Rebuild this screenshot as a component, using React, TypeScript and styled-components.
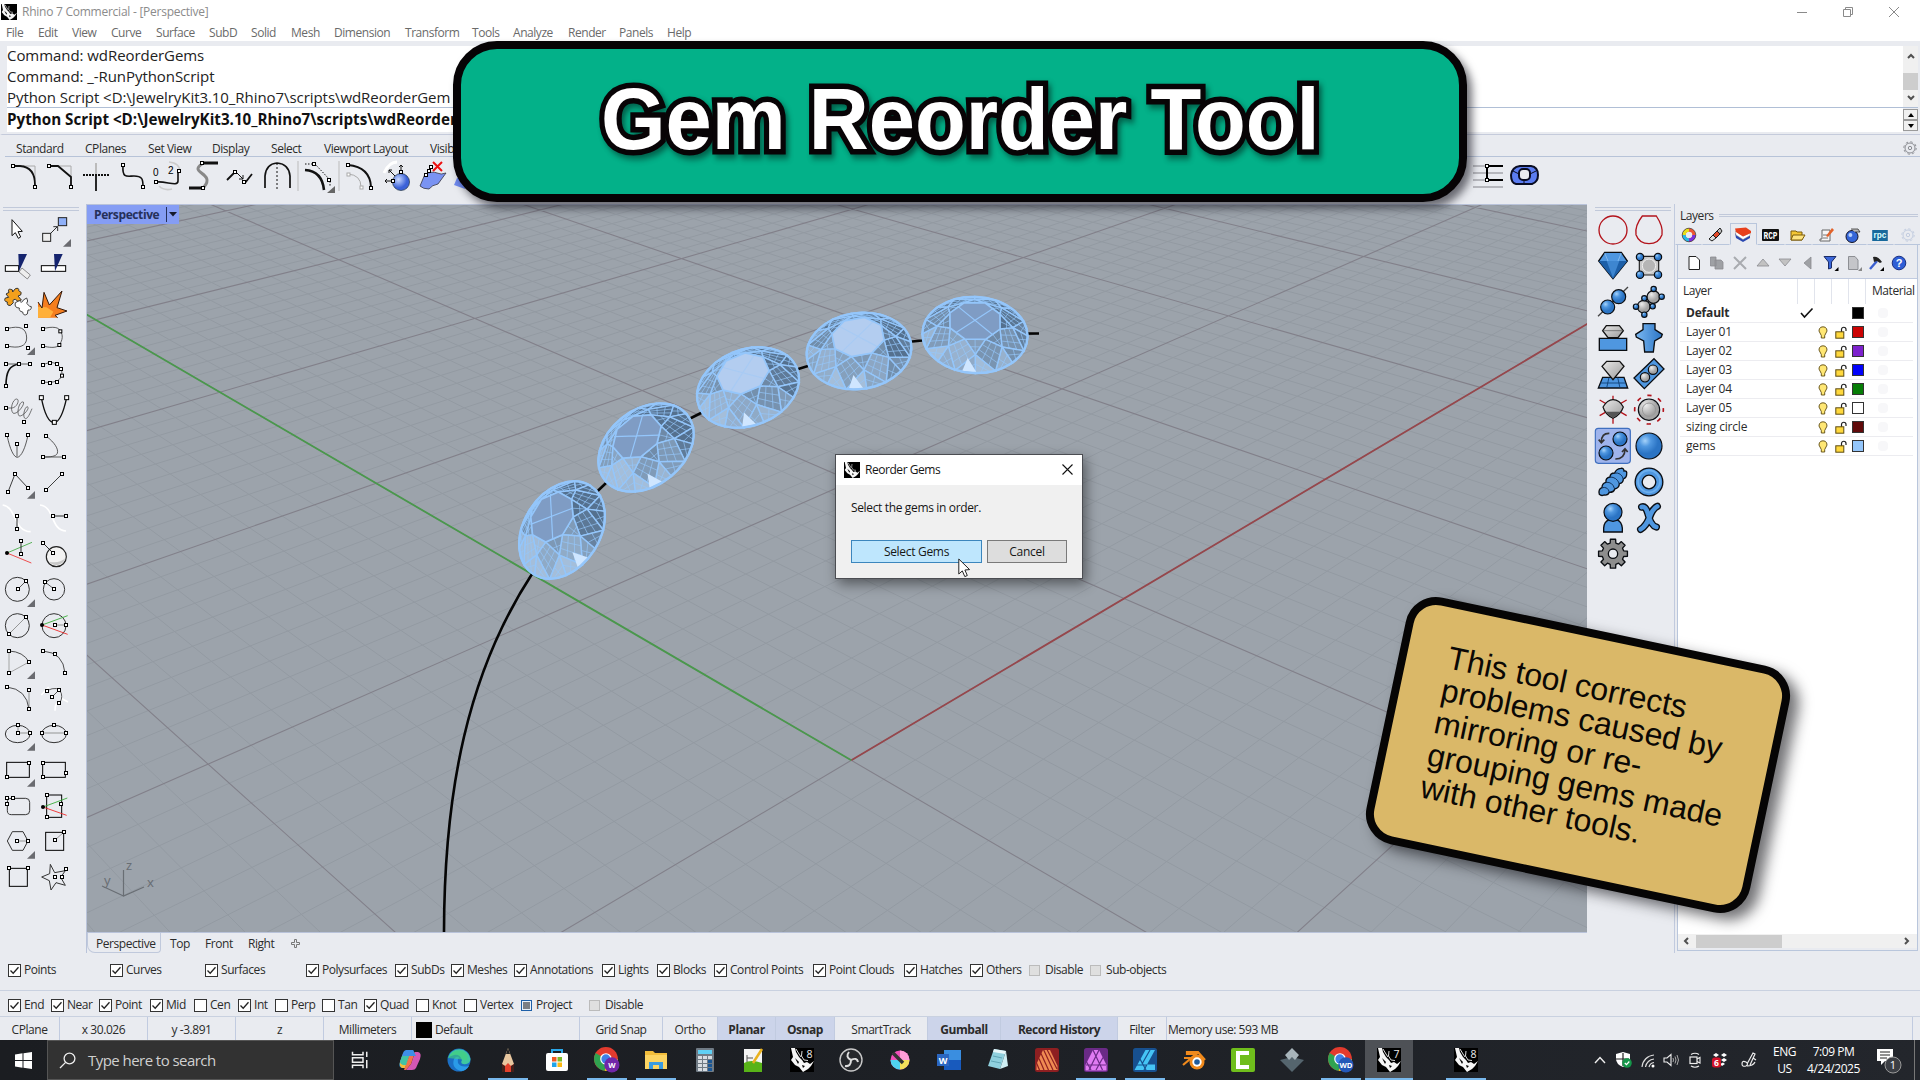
import React from 'react';
import styled, { createGlobalStyle, css } from 'styled-components';

const UI = '"Open Sans", "Noto Sans", sans-serif';

const Global = createGlobalStyle`
  html, body { margin: 0; padding: 0; background: #e9ebf0; }
  *, *::before, *::after { box-sizing: border-box; }
  svg { display: block; }
`;

const Screen = styled.div`
  position: relative;
  width: 1920px;
  height: 1080px;
  overflow: hidden;
  display: flex;
  flex-direction: column;
  background: #e9ebf0;
  color: #2b2b2b;
  font: 12px/16px ${UI};
  letter-spacing: -0.45px;
  white-space: nowrap;
`;

/* ---------- title, menu, command line ---------- */
const TitleBar = styled.div`
  height: 23px;
  background: #fff;
  display: flex;
  align-items: center;
  padding: 0 20px 0 1px;
  gap: 5px;
  color: #8b8b8b;
  letter-spacing: -0.25px;
`;
const WindowButtons = styled.div`
  margin-left: auto;
  display: flex;
  gap: 34px;
`;
const MenuBar = styled.div`
  height: 18px;
  background: #fff;
  display: flex;
  align-items: center;
  padding: 2px 0 0 6px;
  color: #6a6a6a;
`;
const Slot = styled.div<{ $w: number }>`
  width: ${(p) => p.$w}px;
  flex: none;
`;
const CommandArea = styled.div`
  height: 94px;
  padding: 5px 2px 0 5px;
  border-bottom: 1px solid #c5cbdb;
  border-left: 2px solid #e9ebf0;
  display: flex;
  flex-direction: column;
  color: #222;
  font-size: 15px;
`;
const History = styled.div`
  height: 62px;
  display: flex;
  background: #fff;
  border-bottom: 1px solid #b0bfd6;
`;
const HistoryLines = styled.div`
  flex: 1;
  height: 61px;
  margin-top: -1px;
  line-height: 20.8px;
  letter-spacing: -0.06px;
`;
const ScrollTrack = styled.div`
  width: 15px;
  background: #f0f0f0;
  display: flex;
  flex-direction: column;
  align-items: center;
  justify-content: space-between;
  padding: 6px 0 5px;
`;
const ScrollThumb = styled.div`
  width: 15px;
  height: 17px;
  background: #cdcdcd;
  margin-top: 8px;
`;
const Prompt = styled.div`
  height: 24px;
  display: flex;
  justify-content: space-between;
  background: #fff;
  font-weight: 700;
  font-size: 15.2px;
  color: #111;
  line-height: 22px;
  letter-spacing: 0;
`;
const Spinner = styled.div`
  width: 15px;
  padding-top: 1px;
  background: #e9ebf0;
  display: grid;
  grid-template-rows: 11px 11px;
`;
const SpinButton = styled.div`
  border: 1px solid #9a9a9a;
  background: #f0f0f0;
  display: flex;
  align-items: center;
  justify-content: center;
`;
const TabStrip = styled.div`
  height: 22px;
  margin-left: 5px;
  border-bottom: 1px solid #b7c3d8;
  display: flex;
  align-items: center;
  padding: 5px 3px 0 11px;
`;
const TabLabel = styled(Slot)`
  padding-top: 2px;
`;
const ToolRow = styled.div`
  height: 47px;
  display: flex;
  padding: 2px 0 0 6px;
`;
const ToolSlot = styled.div<{ $gap?: number }>`
  width: 36px;
  height: 36px;
  flex: none;
  margin-left: ${(p) => p.$gap ?? 0}px;
  svg { overflow: visible; }
`;

/* ---------- main area ---------- */
const Main = styled.div`
  height: 749px;
  display: flex;
`;
const Side = styled.div`
  width: 87px;
  flex: none;
  padding-top: 3px;
  border-right: 1px solid #b9c3da;
`;
const Grip = styled.div<{ $m: string }>`
  height: 4px;
  margin: ${(p) => p.$m};
  border: solid #c1c9da;
  border-width: 1px 0;
`;
const SideGrid = styled.div`
  display: grid;
  grid-template-columns: 36px 36px;
  grid-auto-rows: 36px;
  svg { overflow: visible; }
`;
const Center = styled.div`
  width: 1500px;
  flex: none;
  display: flex;
  flex-direction: column;
`;
const Viewport = styled.div`
  position: relative;
  height: 729px;
  border-top: 1px solid #b9c3da;
  border-bottom: 1px solid #b9c3da;
  background: #9ca3ab;
  overflow: hidden;
`;
const Scene = styled.svg`
  position: absolute;
  left: 0;
  top: 0;
`;
const ViewLabel = styled.div`
  position: relative;
  width: 92px;
  height: 19px;
  background: #859df4;
  color: #25305a;
  font-weight: 700;
  display: flex;
  align-items: center;
  gap: 7px;
  padding-left: 7px;
  letter-spacing: -0.4px;
`;
const LabelArrow = styled.div`
  height: 15px;
  border-left: 1px solid #25305a;
  padding: 5px 0 0 2px;
`;
const ViewTabs = styled.div`
  height: 20px;
  display: flex;
  align-items: flex-start;
`;
const ViewTab = styled.div<{ $w: number; $on?: boolean }>`
  width: ${(p) => p.$w}px;
  height: 20px;
  line-height: 22px;
  ${(p) => p.$on && css`
    padding-left: 8px;
    border: 1px solid #c0c9dc;
    border-top: 0;
    border-radius: 0 0 4px 8px;
    margin-right: 9px;
  `}
`;
const Palette = styled.div`
  width: 88px;
  flex: none;
  padding-top: 3px;
  border-right: 1px solid #c1cade;
`;
const PaletteGrid = styled(SideGrid)`
  margin: 1px 0 0 7.5px;
`;

/* ---------- layers panel ---------- */
const Layers = styled.div`
  width: 243px;
  flex: none;
  padding: 3px 0 0 2px;
  display: flex;
  flex-direction: column;
`;
const PanelTitle = styled.div`
  display: flex;
  align-items: center;
  height: 16px;
  padding: 1px 0 0 3px;
  gap: 5px;
`;
const TitleRule = styled.div`
  flex: 1;
  height: 3px;
  border: solid #c1c9da;
  border-width: 1px 0;
`;
const PanelTabs = styled.div`
  height: 22px;
  display: flex;
  margin-left: -2px;
`;
const PanelTab = styled.div<{ $on?: boolean }>`
  width: 27.4px;
  flex: none;
  height: 22px;
  border: 1px solid transparent;
  border-bottom-color: #b9c6dc;
  display: flex;
  align-items: center;
  justify-content: center;
  padding-top: 2px;
  ${(p) => p.$on && css`border-color: #b9c6dc #b9c6dc transparent;`}
`;
const PanelBody = styled.div`
  flex: none;
  height: 706px;
  display: flex;
  flex-direction: column;
  border: solid #b9c6dc;
  border-width: 0 1px 0 1px;
`;
const PanelTools = styled.div`
  height: 34px;
  display: flex;
  align-items: center;
  border-bottom: 1px solid #c1cbe0;
  padding: 2px 0 0 5px;
  flex: none;
`;
const PanelTool = styled.div`
  width: 22.75px;
  flex: none;
  display: flex;
  justify-content: center;
`;
const HeaderRow = styled.div`
  height: 25px;
  flex: none;
  background: #fff;
  display: flex;
  line-height: 24px;
  padding-left: 5px;
`;
const HeaderCell = styled.div<{ $w: number }>`
  width: ${(p) => p.$w}px;
  border-right: 1px solid #e1e4ec;
`;
const LayerRows = styled.div`
  flex: 1;
  background: #fff;
  padding: 0 4px 0 2px;
`;
const LayerRow = styled.div<{ $on?: boolean }>`
  height: 19px;
  display: flex;
  align-items: center;
  border-bottom: 1px solid #ececf0;
  padding-left: 6px;
  font-weight: ${(p) => (p.$on ? 700 : 400)};
  letter-spacing: -0.18px;
`;
const LayerCell = styled.div<{ $w: number }>`
  width: ${(p) => p.$w}px;
  flex: none;
`;
const Swatch = styled.div<{ $c: string }>`
  width: 12px;
  height: 12px;
  border: 1px solid #333;
  background: ${(p) => p.$c};
`;
const MatDot = styled.div`
  width: 10px;
  height: 10px;
  margin-left: 14px;
  border-radius: 4px;
  background: #f7f7f9;
`;
const HScroll = styled.div`
  height: 14px;
  background: #f0f0f0;
  display: flex;
  align-items: center;
  padding: 0 6px 0 4px;
`;
const HThumb = styled.div`
  width: 86px;
  height: 13px;
  margin: 0 auto 0 6px;
  background: #cdcdcd;
`;
const PanelFoot = styled.div`
  height: 3px;
  border-bottom: 1px solid #b9c6dc;
`;

/* ---------- check rows and status bar ---------- */
const CheckRow = styled.div<{ $h: number; $pad: number }>`
  height: ${(p) => p.$h}px;
  display: flex;
  padding: ${(p) => p.$pad}px 0 0 8px;
  border-bottom: 1px solid #c9d1e0;
`;
const CheckItem = styled.div<{ $w: number }>`
  width: ${(p) => p.$w}px;
  height: 16px;
  flex: none;
  display: flex;
  align-items: center;
  gap: 3px;
`;
const Box = styled.div<{ $s: string }>`
  width: 13px;
  height: 13px;
  flex: none;
  background: #fff;
  border: 1px solid #333;
  ${(p) => p.$s === 'dis' && css`width: 11px; height: 11px; margin: 0 2px 0 0; background: #dfdfdf; border-color: #bbb;`}
  ${(p) => p.$s === 'mix' && css`width: 11px; height: 11px; margin-right: 1px; border-color: #1d5fa8; background: #7b7f85; box-shadow: inset 0 0 0 1px #e9f2fb;`}
`;
const StatusBar = styled.div`
  height: 23px;
  display: flex;
`;
const StatusCell = styled.div<{ $w: number; $on?: boolean; $left?: boolean }>`
  width: ${(p) => p.$w}px;
  flex: none;
  border-right: 1px solid #c1cbe0;
  display: flex;
  align-items: center;
  justify-content: ${(p) => (p.$left ? 'flex-start' : 'center')};
  gap: 3px;
  padding: 2px 0 0 ${(p) => (p.$left ? 4 : 0)}px;
  background: ${(p) => (p.$on ? '#ccd4ea' : 'transparent')};
  font-weight: ${(p) => (p.$on ? 700 : 400)};
`;
const BlackChip = styled.div`
  width: 16px;
  height: 16px;
  background: #000;
`;

/* ---------- taskbar ---------- */
const Taskbar = styled.div`
  height: 40px;
  display: flex;
  background: linear-gradient(90deg, #1b1d21, #1d2025 50%, #23262c);
  color: #fff;
`;
const Start = styled.div`
  width: 47px;
  padding: 12px 0 0 15px;
`;
const Search = styled.div`
  width: 287px;
  border: 1px solid #555;
  background: #323232;
  display: flex;
  align-items: center;
  gap: 12px;
  padding-left: 11px;
  font-size: 15px;
  color: #d0d0d0;
  letter-spacing: -0.55px;
`;
const Task = styled.div<{ $w?: number; $run?: boolean; $on?: boolean }>`
  width: ${(p) => p.$w ?? 49}px;
  flex: none;
  display: flex;
  align-items: center;
  justify-content: center;
  background: ${(p) => (p.$on ? '#4e5156' : 'transparent')};
  ${(p) => p.$run && css`
    background-image: linear-gradient(#78b8ec, #78b8ec);
    background-repeat: no-repeat;
    background-position: bottom center;
    background-size: ${p.$on ? 48 : 40}px 2px;
  `}
`;
const Tray = styled.div`
  margin-left: auto;
  display: flex;
  align-items: center;
  font-size: 12px;
  line-height: 17px;
  text-align: center;
`;
const TraySlot = styled.div<{ $w: number }>`
  width: ${(p) => p.$w}px;
  flex: none;
  display: flex;
  justify-content: center;
`;
const Peek = styled.div`
  width: 6px;
  height: 40px;
  border-left: 1px solid #777;
`;

/* ---------- overlays ---------- */
const Banner = styled.div`
  position: absolute;
  left: 453px;
  top: 41px;
  width: 1014px;
  height: 161px;
  border: 8px solid #060305;
  border-radius: 44px;
  background: #03b189;
  box-shadow: 5px 6px 9px rgba(20, 20, 30, 0.6);
  display: flex;
  justify-content: center;
  align-items: center;
`;
const BannerText = styled.div`
  font: 700 87px/100px "Liberation Sans", Arial, sans-serif;
  letter-spacing: 0;
  color: #fff;
  -webkit-text-stroke: 11px #080406;
  paint-order: stroke fill;
  transform: scaleX(0.955);
  filter: drop-shadow(3px 4px 3px rgba(0, 0, 0, 0.45));
  padding-bottom: 6px;
`;
const Note = styled.div`
  position: absolute;
  left: 1382px;
  top: 629px;
  width: 392px;
  height: 252px;
  border: 8px solid #060505;
  border-radius: 31px;
  background: #dab868;
  transform: rotate(11.9deg);
  box-shadow: 10px 5px 14px rgba(20, 20, 25, 0.6);
  padding: 33px 0 0 41px;
  font: 32px/33px "Liberation Sans", Arial, sans-serif;
  letter-spacing: 0;
  color: #0b0805;
`;
const Dialog = styled.div`
  position: absolute;
  left: 835px;
  top: 454px;
  width: 248px;
  height: 125px;
  border: 1px solid #4b4d52;
  background: #f0f0f0;
  box-shadow: 3px 5px 12px rgba(0, 0, 0, 0.45);
  color: #161616;
`;
const DialogTitle = styled.div`
  height: 30px;
  background: #fff;
  display: flex;
  align-items: center;
  padding: 0 9px 1px 8px;
  gap: 5px;
  svg:last-child { margin-left: auto; }
`;
const DialogText = styled.div`
  padding: 15px 0 0 15px;
  letter-spacing: -0.35px;
`;
const DialogButtons = styled.div`
  display: flex;
  gap: 5px;
  padding: 24px 0 0 15px;
`;
const DialogButton = styled.div<{ $w: number; $hot?: boolean }>`
  width: ${(p) => p.$w}px;
  height: 23px;
  border: 1px solid ${(p) => (p.$hot ? '#3c86bd' : '#7a7a7a')};
  background: ${(p) => (p.$hot ? '#bee6fd' : '#dddddd')};
  line-height: 21px;
  text-align: center;
  letter-spacing: -0.3px;
`;
const Cursor = styled.svg`
  position: absolute;
  left: 122px;
  top: 103px;
`;

/* ---------- shared drawings ---------- */
const LogoSvg = styled.svg`
  overflow: visible;
`;
const RhinoLogo = ({ w = 16, n }: { w?: number; n?: string }) => (
  <LogoSvg width={w} height={w} viewBox="0 0 24 24">
    <rect width="24" height="24" fill="#000" />
    <path d="M1 0 L5 0 L6 4 L9 9 L12 12 L14 15 L17 14 L20 16 L24 13 L21 18 L18 21 L13 24 L9 19 L5 17 L1 12 L3 9z" fill="#f6f6f6" />
    <path d="M6 1 L9 6 L11 9 M12 3 L11.5 8 L14 12 L18 12.5" stroke="#ddd" strokeWidth="1" fill="none" />
    <path d="M5 10 L9 14 L8 16z M12 17 L15 18 L13 20z" fill="#000" />
    {n && <text x="16.5" y="9.5" fontSize="10.5" fill="#eee" letterSpacing="0" fontFamily="Open Sans, sans-serif">{n}</text>}
  </LogoSvg>
);
const Caret = ({ d, s = '#505050' }: { d: string; s?: string }) => (
  <svg width="8" height="8" viewBox="0 0 8 8"><path d={d} fill="none" stroke={s} strokeWidth="2" /></svg>
);
const Gear = ({ c, w = 14 }: { c: string; w?: number }) => (
  <svg width={w} height={w} viewBox="0 0 14 14" fill="none" stroke={c}>
    <circle cx="7" cy="7" r="5" /><circle cx="7" cy="7" r="6.2" strokeDasharray="2.4 2.4" /><circle cx="7" cy="7" r="1.7" />
  </svg>
);

/* Square control-point handles on the three-units-per-pixel icon artboard. */
const Pts = ({ at, r = 4.5 }: { at: number[][]; r?: number }) => (
  <>{at.map(([x, y], i) => <rect key={i} x={x - r} y={y - r} width={r * 2} height={r * 2} fill="#fff" stroke="#000" strokeWidth="3" />)}</>
);
const Flyout = ({ x, y }: { x: number; y: number }) => <path d={`M${x} ${y} v-23 l-24 23z`} fill="#6a6b70" />;
const Thin = ({ d, c = '#444', w = 2.6 }: { d: string; c?: string; w?: number }) => <path d={d} fill="none" stroke={c} strokeWidth={w} />;

const leftIcons: React.ReactNode[] = [
  <path d="M36 59 L36 107 L46 98 L55 115 L62 111 L54 95 L67 94z" fill="#fff" stroke="#111" strokeWidth="3" />,
  <><Thin d="M150 102 L172 80 M160 80 h13 v13" c="#111" /><rect x="175" y="53" width="25" height="24" fill="#8fb0f8" stroke="#222" strokeWidth="3" /><rect x="128" y="100" width="24" height="24" fill="#eee" stroke="#222" strokeWidth="3" /><Flyout x={213} y={140} /></>,
  <><rect x="16" y="197" width="40" height="17" fill="#fff" stroke="#000" strokeWidth="3" /><path d="M55 162 h26 l-24 52z" fill="#15246e" /><path d="M66 204 l25 21 l-9 12 l-25 -21z" fill="#eee" stroke="#777" strokeWidth="2.5" /></>,
  <><rect x="124" y="197" width="73" height="17" fill="#fff" stroke="#000" strokeWidth="3" /><path d="M162 162 h26 l-23 52z" fill="#15246e" /></>,
  <>
    <path d="M18 282 L27 277 Q22 266 32 268 Q40 268 38 276 L46 266 Q58 262 56 272 Q68 276 62 285 L54 288 L64 300 L54 304 L46 298 Q36 298 40 308 L32 316 Q20 318 22 306 Q10 304 16 294 L26 292z" fill="#f2a01c" stroke="#333" strokeWidth="3" strokeLinejoin="round" />
    <path d="M46 308 L58 302 Q66 312 70 300 L80 294 Q86 304 80 310 Q90 322 94 320 Q94 332 84 330 L82 342 Q70 350 68 336 Q56 334 58 324 Q42 324 46 308z" fill="#fff" stroke="#444" strokeWidth="3" strokeLinejoin="round" />
  </>,
  <><path d="M114 353 V306 L126 324 L132 277 L148 315 L186 273 L171 323 L201 333 L165 346 L173 353z" fill="#f57e1e" /><path d="M114 353 V320 L140 322 L160 335 L150 353z" fill="#ffb03a" /><path d="M114 306 L126 324 L132 277 L148 315 L186 273 L171 323 L201 333 L165 346 L173 353" fill="none" stroke="#33180b" strokeWidth="3" /></>,
  <><Thin d="M21 386 C60 375 80 385 80 414 C80 440 55 446 21 438" /><Pts at={[[21, 387], [78, 378], [21, 438], [84, 444]]} /><Flyout x={105} y={465} /></>,
  <><Thin d="M129 386 C160 378 178 382 181 394 C190 405 188 420 178 435 C168 446 145 442 129 438" /><Pts at={[[129, 387], [181, 394], [178, 435], [129, 438]]} /></>,
  <><Thin d="M57 492 h33" /><Thin d="M18 557 C18 515 28 496 57 492" c="#111" w={5} /><Thin d="M18 492 h35" /><Pts at={[[18, 492], [57, 492], [90, 492], [18, 558]]} /></>,
  <><Thin d="M129 495 C150 483 172 485 183 507 C192 530 180 552 129 546" /><Pts at={[[129, 495], [150, 489], [171, 492], [183, 507], [186, 527], [171, 546], [150, 549], [129, 546]]} /></>,
  <><Thin d="M18 624 h18 C52 622 60 598 50 597 C38 597 28 630 40 640 C52 644 76 612 70 606 C58 602 48 640 58 648 C68 650 92 624 82 620 C74 620 66 652 76 656 C84 656 90 640 96 626" w={2.2} /><Pts at={[[18, 624], [72, 666]]} /></>,
  <><Thin d="M124 593 C135 650 148 668 163 668 C180 666 192 630 200 593" c="#111" w={4} /><Pts r={6} at={[[124, 593], [200, 593], [163, 667]]} /></>,
  <><Thin d="M21 705 C30 750 42 772 52 772 C64 770 76 745 84 705 M51 732 v38" /><Pts at={[[21, 705], [84, 705], [51, 732]]} /></>,
  <><Thin d="M138 708 C165 728 176 748 172 760 C168 770 150 771 129 771 h60" /><Pts at={[[138, 708], [129, 771], [192, 771]]} /></>,
  <><Thin d="M24 876 L45 822 L84 864" c="#222" /><Pts at={[[45, 822], [84, 864], [24, 876]]} /><Flyout x={105} y={896} /></>,
  <><Thin d="M138 870 L186 822" c="#222" /><Pts at={[[138, 870], [186, 822]]} /></>,
  <><Thin d="M8 915 C50 920 40 995 92 995" c="#fff" w={5} /><Thin d="M51 948 v38" c="#111" /><Pts at={[[51, 948], [51, 987]]} /></>,
  <><Thin d="M120 915 C165 920 150 990 198 993" c="#fff" w={5} /><Thin d="M159 948 h38" c="#111" /><Pts at={[[159, 948], [198, 948]]} /></>,
  <><Thin d="M21 1059 L96 1027" c="#4a4" /><Thin d="M21 1059 L94 1089" c="#e33" /><Thin d="M63 1023 v38" c="#111" /><circle cx="21" cy="1059" r="6" /><Pts at={[[63, 1023], [63, 1062]]} /></>,
  <><circle cx="169" cy="1070" r="30" fill="#f3f3f3" stroke="#222" strokeWidth="3.5" /><path d="M148 1085 A28 28 0 0 0 196 1075 Q176 1092 148 1085" fill="#c8c8c8" /><Thin d="M129 1029 l30 30" c="#111" /><Pts at={[[129, 1029], [159, 1059]]} /></>,
  <><circle cx="52" cy="1168" r="36" fill="none" stroke="#333" strokeWidth="3" /><Thin d="M54 1167 L78 1143" /><Pts at={[[54, 1167], [78, 1143]]} /><Flyout x={105} y={1221} /></>,
  <><circle cx="162" cy="1168" r="32" fill="none" stroke="#333" strokeWidth="3" /><Thin d="M162 1167 L135 1146" /><Pts at={[[162, 1167], [135, 1146]]} /></>,
  <><circle cx="52" cy="1277" r="36" fill="none" stroke="#333" strokeWidth="3" /><Thin d="M27 1302 L78 1251" c="#888" /><Pts at={[[27, 1302], [78, 1251]]} /></>,
  <><circle cx="162" cy="1277" r="36" fill="none" stroke="#333" strokeWidth="3" /><Thin d="M126 1275 L203 1247" c="#3a3" /><Thin d="M126 1275 L203 1303" c="#e22" /><Thin d="M165 1275 h33" c="#888" /><circle cx="126" cy="1275" r="6" /><Pts at={[[165, 1275], [198, 1275]]} /></>,
  <><Thin d="M27 1353 V1419 L87 1386" c="#999" /><Thin d="M27 1353 Q70 1355 87 1386" c="#333" /><Pts at={[[27, 1353], [87, 1386], [27, 1419]]} /><Flyout x={105} y={1437} /></>,
  <><Thin d="M129 1353 Q190 1358 195 1419" c="#333" /><Pts at={[[129, 1353], [165, 1362], [195, 1419]]} /></>,
  <><Thin d="M87 1470 V1527" c="#888" /><Thin d="M21 1461 Q80 1468 87 1527" c="#333" /><Pts at={[[21, 1461], [87, 1470], [87, 1527]]} /></>,
  <><Thin d="M124 1485 l22 -24 M165 1532 q0 -20 10 -26 M186 1496 l18 10" c="#fff" w={5} /><Thin d="M141 1472 Q175 1455 184 1480 Q188 1500 177 1509 M156 1491 L177 1470" /><Pts at={[[141, 1473], [177, 1470], [156, 1491], [177, 1509]]} /></>,
  <><ellipse cx="53" cy="1602" rx="37" ry="26" fill="none" stroke="#333" strokeWidth="3" /><Thin d="M54 1575 v24 h36" c="#888" /><Pts at={[[54, 1575], [54, 1599], [90, 1599]]} /><Flyout x={105} y={1652} /></>,
  <><ellipse cx="162" cy="1602" rx="37" ry="26" fill="none" stroke="#333" strokeWidth="3" /><Thin d="M126 1599 h72" c="#888" /><Pts at={[[162, 1575], [126, 1599], [198, 1599]]} /></>,
  <><rect x="20" y="1687" width="68" height="45" fill="none" stroke="#000" strokeWidth="3" /><Pts at={[[87, 1689], [21, 1731]]} /><Flyout x={105} y={1760} /></>,
  <><rect x="128" y="1687" width="68" height="45" fill="none" stroke="#000" strokeWidth="3" /><Pts at={[[129, 1689], [129, 1731], [198, 1719]]} /></>,
  <><rect x="22" y="1795" width="67" height="49" rx="12" fill="none" stroke="#333" strokeWidth="3" /><Pts at={[[21, 1794], [39, 1794], [21, 1812]]} /></>,
  <><rect x="140" y="1785" width="45" height="67" fill="none" stroke="#000" strokeWidth="3" /><Thin d="M129 1821 L202 1794" c="#3a3" /><Thin d="M129 1821 L200 1846" c="#e22" /><circle cx="129" cy="1821" r="6" /><Pts at={[[141, 1785], [183, 1812], [141, 1851]]} /></>,
  <><path d="M22 1923 L37 1895 H69 L84 1923 L69 1951 H37z" fill="none" stroke="#333" strokeWidth="3" /><Thin d="M51 1923 h33" c="#888" /><Pts at={[[51, 1923], [84, 1923]]} /><Flyout x={105} y={1976} /></>,
  <><rect x="137" y="1897" width="54" height="54" fill="none" stroke="#000" strokeWidth="3" /><Thin d="M165 1920 L192 1896" c="#888" /><Pts at={[[165, 1920], [192, 1896]]} /></>,
  <><rect x="28" y="2005" width="54" height="54" fill="none" stroke="#000" strokeWidth="3" /><Pts at={[[27, 2004], [84, 2004]]} /></>,
  <><path d="M151 1993 L164 2018 L196 2012 L182 2032 L196 2056 L168 2048 L153 2070 L148 2042 L125 2031 L149 2021z" fill="none" stroke="#333" strokeWidth="3" /><Pts at={[[198, 2007], [165, 2031], [186, 2031]]} /></>,
];

const Ball = ({ x, y, r, c = 'url(#blueBall)' }: { x: number; y: number; r: number; c?: string }) => (
  <circle cx={x} cy={y} r={r} fill={c} stroke="#0a0d12" strokeWidth="3.5" />
);
const GRAY = 'url(#grayBall)';
const BLUE = '#4f97e0';
const ropeOutline = 'M86 884 Q82 868 94 864 Q94 850 106 848 Q104 834 118 832 Q118 820 132 820 Q136 808 150 806 Q160 804 160 814 Q170 812 168 824 Q168 834 158 838 Q158 850 146 852 Q146 864 132 868 Q130 878 116 878 Q112 888 100 886 Q92 890 86 884z';
const crossStrokes = 'M213 922 Q225 918 231 940 Q240 978 257 982 M260 920 Q246 926 236 954 Q226 980 210 989';
const gearShape = Array.from({ length: 8 }, (_, i) =>
  [[-0.26, 33], [-0.18, 44], [0.18, 44], [0.26, 33]]
    .map(([o, r], j) => {
      const a = (i * Math.PI) / 4 + o;
      return `${i + j === 0 ? 'M' : 'L'}${127 + r * Math.sin(a)} ${1062 - r * Math.cos(a)}`;
    })
    .join(' ')
).join(' ') + 'z';
const paletteIcons: React.ReactNode[] = [
  <circle cx="127" cy="91" r="42" fill="none" stroke="#b3131b" strokeWidth="4" />,
  <path d="M215 49 H257 Q278 80 274 105 Q264 132 235 132 Q206 132 196 105 Q192 78 215 49z" fill="none" stroke="#b3131b" strokeWidth="4" />,
  <><path d="M102 158 H152 L170 184 L127 237 L84 184z" fill={BLUE} stroke="#0a0d12" strokeWidth="4" /><path d="M84 184 H170 L127 237z" fill="#1d5fa8" /><path d="M108 184 H146 L127 234z" fill="#3e86d0" /><path d="M102 160 L112 184 M152 160 L142 184" stroke="#9ccaf5" strokeWidth="2" /></>,
  <><rect x="206" y="170" width="58" height="56" rx="14" fill="#c9c9c9" stroke="#222" strokeWidth="3.5" /><circle cx="235" cy="198" r="20" fill="#b5b5b5" stroke="#eee" strokeWidth="3" />{[[208, 172], [262, 172], [208, 225], [262, 225]].map(([x, y]) => <Ball key={x + '-' + y} x={x} y={y} r={11} />)}</>,
  <><path d="M82 350 L172 262" stroke="#444" strokeWidth="4" /><Ball x={111} y={322} r={21} /><Ball x={144} y={291} r={21} /></>,
  <><Ball x={219} y={321} r={19} c={GRAY} /><Ball x={248} y={292} r={19} c={GRAY} />{[[249, 268], [273, 291], [246, 320], [221, 345], [196, 321], [221, 296]].map(([x, y]) => <Ball key={x + '-' + y} x={x} y={y} r={8} />)}</>,
  <><path d="M86 416 h82 v36 h-82z" fill={BLUE} stroke="#0a0d12" strokeWidth="4" /><path d="M96 393 L107 378 H146 L158 393 L142 414 H112z" fill="url(#grayLin)" stroke="#111" strokeWidth="4" /><path d="M96 393 H158" stroke="#555" strokeWidth="2" /></>,
  <path d="M217 372 H253 V390 L275 404 L272 412 L252 424 L248 457 H222 L219 424 L197 412 L195 404 L217 390z" fill="url(#blueLin)" stroke="#0a0d12" strokeWidth="4" />,
  <><path d="M96 533 H160 L171 565 H83z" fill="#4c95e0" stroke="#0a0d12" strokeWidth="4" /><path d="M88 550 H166 M115 533 L108 565 M141 533 L148 565" stroke="#0a3a70" strokeWidth="2.5" /><path d="M94 500 L108 485 H147 L160 500 L127 540z" fill="url(#grayLin)" stroke="#111" strokeWidth="4" /></>,
  <><path d="M250 477 L280 508 L221 567 L190 535z" fill={BLUE} stroke="#0a0d12" strokeWidth="4" /><Ball x={223} y={533} r={14} c={GRAY} /><Ball x={247} y={510} r={14} c={GRAY} /></>,
  <><path d="M87 601 L168 648 M168 601 L87 648 M127 588 V672" stroke="#b3131b" strokeWidth="4" /><path d="M97 622 Q110 600 127 600 Q146 600 158 622 Q150 645 127 656 Q104 645 97 622z" fill="url(#grayLin)" stroke="#111" strokeWidth="3.5" /><path d="M103 636 H152 L127 655z" fill="#555" /></>,
  <><circle cx="235" cy="630" r="43" fill="none" stroke="#b3131b" strokeWidth="5" strokeDasharray="13 20.7" strokeDashoffset="6" /><Ball x={235} y={630} r={32} c={GRAY} /><circle cx="235" cy="630" r="20" fill="none" stroke="#999" strokeWidth="3" /></>,
  <><rect x="74" y="686" width="105" height="105" rx="9" fill="#9fb4ec" stroke="#3f6fbf" strokeWidth="3.5" /><Ball x={148} y={718} r={21} /><Ball x={106} y={760} r={21} /><path d="M116 701 Q92 700 92 728 M84 720 l8 9 l9 -9 M134 778 Q162 778 163 750 M154 757 l9 -10 l8 10" fill="none" stroke="#333" strokeWidth="5" /></>,
  <Ball x={235} y={739} r={39} />,
  <><path d={ropeOutline} fill={BLUE} stroke="#0a0d12" strokeWidth="4" /><path d="M94 864 Q112 860 116 878 M106 848 Q126 846 132 868 M118 832 Q138 832 146 852 M132 820 Q152 818 158 838" fill="none" stroke="#12345e" strokeWidth="3" /></>,
  <><circle cx="235" cy="847" r="31" fill="none" stroke="#0a0d12" strokeWidth="25" /><circle cx="235" cy="847" r="31" fill="none" stroke={BLUE} strokeWidth="17" /><circle cx="235" cy="845" r="33" fill="none" stroke="#6db0ef" strokeWidth="5" /></>,
  <><path d="M99 997 V985 Q100 966 116 960 H138 Q153 966 155 985 V997z" fill={BLUE} stroke="#0a0d12" strokeWidth="4" /><Ball x={127} y={938} r={27} /></>,
  <><path d={crossStrokes} fill="none" stroke="#0a0d12" strokeWidth="22" strokeLinecap="round" /><path d={crossStrokes} fill="none" stroke={BLUE} strokeWidth="14" strokeLinecap="round" /></>,
  <><path d={gearShape} fill="#8d8d8d" stroke="#0a0d12" strokeWidth="4" strokeLinejoin="round" /><circle cx="127" cy="1062" r="14" fill="#e9ebf0" stroke="#0a0d12" strokeWidth="4" /></>,
];

/* ---------- command toolbar icons, local 36px boards ---------- */
const P2 = ({ at }: { at: number[][] }) => (
  <>{at.map(([x, y], i) => <rect key={i} x={x - 1.5} y={y - 1.5} width="3" height="3" fill="#fff" stroke="#000" />)}</>
);
const K = ({ d, c = '#111', w = 1.4, dash }: { d: string; c?: string; w?: number; dash?: string }) => (
  <path d={d} fill="none" stroke={c} strokeWidth={w} strokeDasharray={dash} />
);
const topIcons: [number, React.ReactNode][] = [
  [0, <><K d="M17 7 H29 V20" c="#aaa" w={1} /><K d="M8 7 H14 Q29 8 29 26" w={1.8} /><P2 at={[[7, 7], [29, 28]]} /></>],
  [0, <><K d="M17 7 H29 V20" c="#aaa" w={1} /><K d="M8 7 H16 L29 18 V26" w={1.8} /><P2 at={[[7, 7], [29, 28]]} /></>],
  [0, <><K d="M18 4 V15" c="#bbb" w={2} /><K d="M18 15 V32" w={1.8} /><K d="M5 16 H17" dash="2 1" w={1.8} /><K d="M17 16 H31" dash="2 1" w={1.8} /></>],
  [0, <><K d="M9 7 C8 20 14 17 20 17 C28 17 29 20 29 27" w={1.6} /><P2 at={[[9, 6], [29, 28]]} /></>],
  [0, <><K d="M19 3 Q30 4 30 13 M9 27 Q14 32 22 30" c="#ccc" w={1.6} /><K d="M7 23 C16 22 28 28 28 22 V14" w={1.6} /><P2 at={[[6, 23], [29, 12]]} /><text x="3" y="17" fontSize="10" letterSpacing="0" fontFamily="Liberation Sans">0</text><text x="18" y="15" fontSize="10" letterSpacing="0" fontFamily="Liberation Sans">2</text></>],
  [0, <><K d="M16 5 C2 14 30 14 18 28" c="#888" w={3} /><K d="M16 4 H32 M3 29 H16" w={3} /><P2 at={[[16, 4], [17, 29]]} /></>],
  [0, <><K d="M5 21 L13 13 M23 24 L30 15" w={1.8} /><K d="M14 13 L21 20 M21 16 V20 H17" w={1} /><P2 at={[[13, 13], [22, 23]]} /></>],
  [0, <><K d="M7 29 V17 Q8 5 19 4 Q31 5 32 17 V29" w={1.7} /><K d="M19 4 V32" dash="2 2" w={1} /></>],
  [5, <><K d="M-1 2 V32" c="#bbb" w={1} /><K d="M6 11 Q23 12 25 31" w={2.6} /><K d="M6 5 H16 L31 21 V28" dash="1.5 1.5" w={1} /><P2 at={[[15, 5], [30, 21]]} /><path d="M36 34 v-7 l-8 7z" fill="#666" /></>],
  [8, <><K d="M-4 2 V32" c="#bbb" w={1} /><K d="M5 6 Q27 8 28 28" w={2} /><K d="M5 15 Q18 16 18 28" c="#aaa" w={1} /><P2 at={[[5, 6], [28, 29]]} /><rect x="4" y="14" width="3" height="3" fill="#fff" stroke="#aaa" /><rect x="17" y="27" width="3" height="3" fill="#fff" stroke="#aaa" /></>],
  [0, <><K d="M5 14 Q10 3 18 3" c="#fff" w={3} /><circle cx="22" cy="23" r="8.5" fill="url(#ballT)" stroke="#234" strokeWidth=".7" /><K d="M22 14 V6 M20 8 l2 -2 l2 2 M14 22 H6 M8 20 l-2 2 l2 2 M16 17 L10 11 M10 14 v-3 h3" w={1} /><P2 at={[[22, 13], [14, 22]]} /></>],
  [0, <><path d="M10 15 Q18 12 22 14 T31 14 L23 25 Q17 26 14 30 Q8 30 5 27z" fill="#7a93f2" stroke="#334" strokeWidth=".8" /><K d="M18 3 L27 12 M27 3 L18 12" c="#e11" w={2} /><P2 at={[[11, 16], [14, 12], [16, 8]]} /></>],
  [0, <path d="M3 26 L6 19 L14 17 V30z" fill="#6f8af0" />],
];

/* ---------- viewport scene ---------- */
const HORIZON = -315;
const project = (s: number, t: number) => {
  const w = 1 + 0.177 * s + 0.1735 * t;
  return [(851.3 + s * 0.177 * 2664.6 - t * 0.1735 * 993) / w, (760.3 + (s * 0.177 + t * 0.1735) * HORIZON) / w];
};
const seg = (a: number[], b: number[]) => `M${a[0].toFixed(1)} ${a[1].toFixed(1)}L${b[0].toFixed(1)} ${b[1].toFixed(1)}`;
const gridLines = () => {
  let minor = '';
  let major = '';
  for (let i = -40; i <= 110; i++) {
    const k = i / 10;
    const t0 = Math.max(-4, (0.12 - 1 - 0.177 * k) / 0.1735);
    const s0 = Math.max(-4, (0.12 - 1 - 0.1735 * k) / 0.177);
    const d = seg(project(k, t0), project(k, 12)) + seg(project(s0, k), project(12, k));
    if (i % 10) minor += d;
    else major += d;
  }
  return { minor, major };
};
const { minor, major } = gridLines();

type GemSpec = { cx: number; cy: number; rot: number; ox: number; oy: number; bright: boolean; spark: number };
const gems: GemSpec[] = [
  { cx: 562, cy: 530, rot: -57, ox: -10, oy: -13, bright: false, spark: 52 },
  { cx: 646, cy: 447.5, rot: -38, ox: -9, oy: -11, bright: false, spark: 70 },
  { cx: 748, cy: 387.5, rot: -21, ox: -5, oy: -14, bright: true, spark: 84 },
  { cx: 859, cy: 351, rot: -8, ox: -1, oy: -14, bright: true, spark: 92 },
  { cx: 975, cy: 335, rot: 3, ox: 0, oy: -14, bright: false, spark: 98 },
];
const Gem = ({ cx, cy, rot, ox, oy, bright, spark }: GemSpec) => {
  const ra = (rot * Math.PI) / 180;
  const pt = (deg: number, f: number) => {
    const a = (deg * Math.PI) / 180;
    const r = 0.51 + 0.49 * f;
    const x = 53 * r * Math.cos(a);
    const y = 38.5 * r * Math.sin(a);
    return [cx + x * Math.cos(ra) - y * Math.sin(ra) + ox * (1 - f), cy + x * Math.sin(ra) + y * Math.cos(ra) + oy * (1 - f)];
  };
  const facets: React.ReactNode[] = [];
  let mesh = '';
  const mix = (a: number[], b: number[], k: number) => [a[0] + (b[0] - a[0]) * k, a[1] + (b[1] - a[1]) * k];
  const facet = (q: number[][], n: number) => {
    const mx = (q[0][0] + q[1][0] + q[2][0] + q[3][0]) / 4 - cx;
    const my = (q[0][1] + q[1][1] + q[2][1] + q[3][1]) / 4 - cy;
    const wob = Math.sin(facets.length * 2.3 + cx) * 0.18;
    const l = Math.max(0, Math.min(1, 0.42 + my / 70 - mx / 190 + wob));
    const c = [84 + 80 * l, 112 + 78 * l, 142 + 76 * l].map(Math.round);
    facets.push(<path key={facets.length} d={'M' + q.map((p) => p.join(' ')).join('L') + 'z'} fill={`rgb(${c})`} stroke="#94c6fb" strokeWidth="1.4" />);
    for (let i = 1; i < n; i++) {
      mesh += seg(mix(q[0], q[1], i / n), mix(q[3], q[2], i / n)) + seg(mix(q[0], q[3], i / n), mix(q[1], q[2], i / n));
    }
  };
  for (let i = 0; i < 8; i++) {
    const a = i * 45 + 20;
    facet([pt(a, 0), pt(a + 22.5, 0.42), pt(a, 1), pt(a - 22.5, 0.42)], 3);
    facet([pt(a, 0), pt(a + 22.5, 0.42), pt(a + 22.5, 0.42), pt(a + 45, 0)], 2);
    facet([pt(a + 22.5, 0.42), pt(a, 1), pt(a + 11, 1), pt(a + 22.5, 1)], 2);
    facet([pt(a + 22.5, 0.42), pt(a + 22.5, 1), pt(a + 34, 1), pt(a + 45, 1)], 2);
  }
  const table = Array.from({ length: 8 }, (_, i) => pt(i * 45 + 20, 0));
  const g = spark - rot;
  const low = [pt(g + 3, 0.55), pt(g - 9, 0.97), pt(g + 7, 0.97)];
  return (
    <g>
      <ellipse cx={cx} cy={cy} rx="53" ry="38.5" transform={`rotate(${rot} ${cx} ${cy})`} fill="#8fb2dc" />
      {facets}
      <path d={mesh} stroke="#94c6fb" strokeWidth=".8" fill="none" opacity=".85" />
      <path d={'M' + table.map((p) => p.join(' ')).join('L') + 'z'} fill={bright ? '#b3cdf0' : '#7f9cc4'} stroke="#94c6fb" strokeWidth="1.6" />
      <path d={seg(pt(45, -0.05), pt(225, -0.05)) + seg(pt(135, -0.05), pt(315, -0.05))} stroke="#94c6fb" strokeWidth="1.2" opacity={bright ? 0.35 : 1} />
      <path d={'M' + low.map((p) => p.join(' ')).join('L') + 'z'} fill="#cfe6ff" />
      <ellipse cx={cx} cy={cy} rx="52.5" ry="38" transform={`rotate(${rot} ${cx} ${cy})`} fill="none" stroke="#94c6fb" strokeWidth="2.4" />
    </g>
  );
};

/* ---------- data ---------- */
const menus: [string, number][] = [['File', 32], ['Edit', 34], ['View', 39], ['Curve', 45], ['Surface', 53], ['SubD', 42], ['Solid', 40], ['Mesh', 43], ['Dimension', 71], ['Transform', 67], ['Tools', 41], ['Analyze', 55], ['Render', 51], ['Panels', 48], ['Help', 40]];
const toolTabs: [string, number][] = [['Standard', 69], ['CPlanes', 63], ['Set View', 64], ['Display', 59], ['Select', 53], ['Viewport Layout', 106], ['Visibility', 60]];
const layers: [string, string][] = [['Default', '#000'], ['Layer 01', '#cc0303'], ['Layer 02', '#7d21cd'], ['Layer 03', '#0202fb'], ['Layer 04', '#067d06'], ['Layer 05', '#fff'], ['sizing circle', '#600a0a'], ['gems', '#94c6fb']];
const filters: [string, number, string][] = [['Points', 102, 'on'], ['Curves', 95, 'on'], ['Surfaces', 101, 'on'], ['Polysurfaces', 89, 'on'], ['SubDs', 56, 'on'], ['Meshes', 63, 'on'], ['Annotations', 88, 'on'], ['Lights', 55, 'on'], ['Blocks', 57, 'on'], ['Control Points', 99, 'on'], ['Point Clouds', 91, 'on'], ['Hatches', 66, 'on'], ['Others', 59, 'on'], ['Disable', 61, 'dis'], ['Sub-objects', 90, 'dis']];
const snaps: [string, number, string][] = [['End', 43, 'on'], ['Near', 48, 'on'], ['Point', 51, 'on'], ['Mid', 44, 'on'], ['Cen', 44, 'off'], ['Int', 37, 'on'], ['Perp', 47, 'off'], ['Tan', 42, 'off'], ['Quad', 52, 'on'], ['Knot', 48, 'off'], ['Vertex', 57, 'off'], ['Project', 68, 'mix'], ['Disable', 70, 'dis']];

const Checks = ({ items }: { items: [string, number, string][] }) => (
  <>
    {items.map(([label, w, s]) => (
      <CheckItem key={label} $w={w}>
        <Box $s={s}>{s === 'on' && <svg width="11" height="11" viewBox="0 0 11 11"><path d="M1.5 5.5 L4.2 8.3 L9.5 2.3" fill="none" stroke="#222" strokeWidth="1.3" /></svg>}</Box>
        {label}
      </CheckItem>
    ))}
  </>
);

/* ---------- taskbar app icons ---------- */
const App24 = ({ children, w = 24 }: { children: React.ReactNode; w?: number }) => <svg width={w} height={w} viewBox="0 0 24 24">{children}</svg>;
const ChromeIcon = ({ label, c }: { label: string; c: string }) => (
  <App24 w={26}>
    <circle cx="11" cy="11" r="11" fill="#e33b2e" />
    <path d="M11 11 L1.5 5.5 A11 11 0 0 0 11 22z" fill="#2fa350" />
    <path d="M11 11 H22 A11 11 0 0 1 10 22z" fill="#fbc116" />
    <circle cx="11" cy="11" r="5.3" fill="#fff" /><circle cx="11" cy="11" r="4.2" fill="#3f7fe8" />
    <circle cx="16.5" cy="16.5" r="7" fill={c} />
    <text x="16.5" y="19.3" fontSize="7" fontWeight="700" fill="#fff" letterSpacing="0" textAnchor="middle" fontFamily="Open Sans, sans-serif">{label}</text>
  </App24>
);
const affinityArt = [
  { fill: 'M1.5 16 L8 2 H15 L22.5 18 V22 H1.5z', line: 'M4.5 22 L1.5 15 M9 22 L4 10.5 M13.5 22 L6 5.5 M18 22 L8.5 1.5 M22 21 L12 1.5' },
  { fill: 'M1.5 17 L9 2 H15 L22.5 17 V22.5 H1.5z', line: 'M9 2 L18.5 22 M15 2 L5 22 M2 17 H22 M1.5 12 L7 22 M19 9.5 L12 22' },
  { fill: 'M1.5 22 L12.5 2 H22 L14 16.5 H22 V22z', line: 'M1 17 H14 M7 11 L13 22 M14 16.5 L11 22 M17 2 L9 16' },
];
const Affinity = ({ a, b, kind }: { a: string; b: string; kind: number }) => (
  <App24>
    <rect width="24" height="24" rx="2.5" fill={a} />
    <path d={affinityArt[kind].fill} fill={b} />
    <path d={affinityArt[kind].line} fill="none" stroke={a} strokeWidth="1.2" />
  </App24>
);
const tasks: { w?: number; run?: boolean; on?: boolean; icon: React.ReactNode }[] = [
  { w: 51, icon: <App24 w={18}><path d="M2 1 V5 H16 V1 M2 23 V19 H16 V23 M2 9 H16 V15 H2z M21 1 V8 M21 12 V23" fill="none" stroke="#eee" strokeWidth="2" /></App24> },
  { w: 50, icon: <App24><path d="M8 2 H15 L18 8 H11 L7 20 H4 Q0 19 2 14z" fill="#2f9fe0" /><path d="M2 14 L5 6 L11 8 L7 20 H4 Q1 18 2 14" fill="#f4bd3c" /><path d="M17 4 H20 Q24 5 22 11 L18 20 Q17 22 14 22 H8 L13 16z" fill="#d457b5" /><path d="M17 4 L13 16 L8 22 H6 L11 8z" fill="#f2734d" /><path d="M2 14 L5 5 Q6 2 9 2 H15 L18 8 H11 L6 16z" fill="#3e8ee8" /><path d="M11 8 L8 17 H5 Q2 16 2 14 L4 8z" fill="#43c3a4" /></App24> },
  { w: 48, icon: <App24><circle cx="12" cy="12" r="11.5" fill="#1b6fc4" /><path d="M1 10 A11.5 11.5 0 0 1 23.5 11 Q23 17 16 16 Q13 15 15 12 Q13 6 7 7 Q3 8 1 10" fill="#3fc8a0" /><path d="M7 11 Q4 20 14 23 Q19 23 22 18 Q14 20 11 15 Q10 12 12 9 Q9 8 7 11" fill="#2a9be8" /><path d="M1 10 Q6 1 14 3 Q22 5 20 12" fill="#45d27a" opacity=".6" /></App24> },
  { w: 49, run: true, icon: <App24><path d="M12 0 L18 16 V24 H6 V16z" fill="#e8c7a0" /><path d="M12 0 L14 6 H10z" fill="#222" /><path d="M6 16 L9 18 L12 15 L15 18 L18 16 V24 H6z" fill="#e2402c" /><path d="M6 16 L9 18 V24 H6z M15 18 L18 16 V24 H15z" fill="#44201a" /></App24> },
  { w: 50, icon: <App24><path d="M7 6 V2 H17 V6" fill="none" stroke="#2aa8ea" strokeWidth="2" /><rect x="1" y="5" width="22" height="18" rx="2" fill="#fff" /><rect x="7" y="9" width="4.5" height="4.5" fill="#f05a24" /><rect x="12.5" y="9" width="4.5" height="4.5" fill="#7cba26" /><rect x="7" y="14.5" width="4.5" height="4.5" fill="#20a4ea" /><rect x="12.5" y="14.5" width="4.5" height="4.5" fill="#fdb913" /></App24> },
  { run: true, icon: <ChromeIcon label="W" c="#7127a8" /> },
  { run: true, icon: <App24><path d="M1 3 H9 L11 5 H23 V21 H1z" fill="#f2bd3b" /><path d="M1 7 H23 V21 H1z" fill="#fcd462" /><path d="M5 21 V14 H19 V21 H15 V17 H9 V21z" fill="#3a9be0" /></App24> },
  { icon: <App24><rect x="3" y="0" width="18" height="24" rx="1" fill="#707b85" /><rect x="5" y="2" width="14" height="4" fill="#5fd0f4" />{[8, 12, 16, 20].map((y) => [5, 10, 15].map((x) => <rect key={x + '.' + y} x={x} y={y} width="4" height="3" fill={x === 15 && y > 11 ? '#1a5796' : '#d8dde2'} />))}</App24> },
  { w: 48, icon: <App24><rect x="3" y="1" width="18" height="23" fill="#f4f4f4" /><path d="M3 15 Q10 11 21 15 V24 H3z" fill="#58b318" /><path d="M6 7 V14 M6 10 H12" stroke="#555" /><path d="M12 15 L21 1" stroke="#e9b11e" strokeWidth="2.5" /></App24> },
  { icon: <RhinoLogo w={24} n="8" /> },
  { icon: <App24><circle cx="12" cy="12" r="11" fill="#26282c" stroke="#c9c9c9" strokeWidth="1.4" /><path d="M12 12 Q6 9 10 4 M12 12 Q18 9 19 14 M12 12 Q12 19 6 18" fill="none" stroke="#ddd" strokeWidth="2" /></App24> },
  { icon: <App24><circle cx="12" cy="12" r="9.5" fill="#f04fb8" /><path d="M12 12 L12 2.5 A9.5 9.5 0 0 1 21.5 12z" fill="#ff9fd8" /><path d="M12 12 H21.5 A9.5 9.5 0 0 1 12 21.5z" fill="#f6e05a" /><path d="M12 12 V21.5 A9.5 9.5 0 0 1 2.5 12z" fill="#4fd2ef" /><path d="M5 5 L15 15" stroke="#333" strokeWidth="3.5" /></App24> },
  { icon: <App24><rect x="7" y="2" width="17" height="20" fill="#3a8ee0" /><rect x="7" y="12" width="17" height="10" fill="#185abd" /><rect x="0" y="6" width="12" height="12" fill="#2b66c0" /><text x="6" y="15.5" fontSize="9" fontWeight="700" letterSpacing="0" textAnchor="middle" fill="#fff" fontFamily="Open Sans, sans-serif">W</text></App24> },
  { icon: <App24><path d="M8 1 L20 3 L14 21 L2 18z" fill="#8fd0de" /><path d="M20 3 L22 18 L14 21z" fill="#cfeef3" /><path d="M8 1 L20 3 L19 6 L7 4z" fill="#e8f7fa" /><path d="M7 8 L16 10 M5 13 L15 15" stroke="#5fa5b5" /></App24> },
  { icon: <Affinity kind={0} a="#8e1f21" b="#ef8a52" /> },
  { run: true, icon: <Affinity kind={1} a="#6a2a86" b="#e07bf2" /> },
  { run: true, icon: <Affinity kind={2} a="#17508f" b="#45c4f5" /> },
  { icon: <App24><path d="M1 17 L14 6 H5 V4 H16 L23 12 M2 10 H10" fill="none" stroke="#f08a1c" strokeWidth="2.2" /><circle cx="15" cy="14" r="7.5" fill="#f08a1c" /><circle cx="15" cy="14" r="4.7" fill="#fff" /><circle cx="15" cy="14" r="2.8" fill="#1f5c9c" /></App24> },
  { icon: <App24><rect width="24" height="24" rx="2" fill="#6fbe1c" /><path d="M18 5 H7 V19 H18" fill="none" stroke="#fff" strokeWidth="4" /></App24> },
  { icon: <App24><path d="M12 9 L24 12 L12 24 L0 12z" fill="#55656e" /><path d="M12 0 L19 7 L15 12 L12 9 L9 12 L5 7z" fill="#a8b5bb" /></App24> },
  { run: true, icon: <ChromeIcon label="WD" c="#2458b8" /> },
  { run: true, on: true, w: 48, icon: <RhinoLogo w={24} n="7" /> },
];

const shade = { stroke: '#1d1d1d', strokeWidth: 1 };
const grayed = { fill: '#9fa1a5', stroke: '#8a8c90', strokeWidth: 0.8 };
const I16 = ({ children }: { children: React.ReactNode }) => <svg width="16" height="16" viewBox="0 0 16 16">{children}</svg>;

const panelTabs: React.ReactNode[] = [
  <I16><circle cx="8" cy="8" r="5" fill="none" stroke="#e53" strokeWidth="3.4" /><path d="M3 8 A5 5 0 0 1 8 3" stroke="#e6e018" strokeWidth="3.4" fill="none" /><path d="M3 8 A5 5 0 0 0 8 13" stroke="#24b8e8" strokeWidth="3.4" fill="none" /><path d="M8 13 A5 5 0 0 0 13 8" stroke="#7a2fe0" strokeWidth="3.4" fill="none" /><circle cx="8" cy="8" r="6.8" fill="none" stroke="#333" strokeWidth=".7" /></I16>,
  <I16><path d="M1 12 L5 8 L8 11 L4 14z" fill="#ddd" {...shade} /><path d="M5 8 L9 4 L12 7 L8 11z" fill="#e34a2a" {...shade} /><path d="M9 4 L12 1 L14 4 L12 7z" fill="#bbb" {...shade} /></I16>,
  <I16><path d="M0 6 L8 11 L15 8 V11 L8 15 L1 11z" fill="#2947b0" /><path d="M0 4 L8 9 L15 6 V8.5 L8 12.5 L1 8z" fill="#fff" stroke="#888" strokeWidth=".5" /><path d="M0 1.5 L11 .5 L16 4 V6 L8 9.5 L1 5z" fill="#e8401c" /></I16>,
  <svg width="17" height="12" viewBox="0 0 17 12"><rect width="17" height="12" rx="1" fill="#111" /><text x="8.5" y="9.6" textAnchor="middle" fontSize="10" fontWeight="700" fill="#fff" letterSpacing="0" textLength="14" lengthAdjust="spacingAndGlyphs" fontFamily="Liberation Mono">RCP</text></svg>,
  <I16><path d="M1 4 H6 L7 5 H12 V13 H1z" fill="#f3c634" stroke="#7a5a0a" /><path d="M3 8 H15 L12 13 H1z" fill="#fde380" stroke="#7a5a0a" /></I16>,
  <I16><path d="M4 3 H12 V14 H2 V12 H4z" fill="#f5f5f5" stroke="#666" /><path d="M5 8 H10 M5 11 H10" stroke="#777" /><path d="M8 9 L14 1 L16 3 L10 10z" fill="#e2622a" /></I16>,
  <I16><circle cx="7" cy="9.5" r="6" fill="#3566d8" stroke="#112" /><circle cx="5.4" cy="8" r="2" fill="#b8d2ff" /><path d="M6 2 H13 L15 5 H10" fill="#bbb" stroke="#333" strokeWidth=".8" /></I16>,
  <svg width="16" height="11" viewBox="0 0 17 12"><rect width="17" height="12" fill="#17699c" /><text x="8.5" y="8.6" textAnchor="middle" fontSize="9" fontWeight="700" fill="#dff" letterSpacing="0" fontFamily="Liberation Sans">rpc</text></svg>,
];
const panelTools: React.ReactNode[] = [
  <I16><path d="M3 1.5 H10 L13.5 5 V14.5 H3z" fill="#fff" stroke="#222" /></I16>,
  <I16><path d="M1.5 2 H7 V11 H1.5z M6 5 H12 L14 7 V14 H6z" {...grayed} /></I16>,
  <I16><path d="M2 2 L14 14 M14 2 L2 14" stroke="#a9abb0" strokeWidth="2" /></I16>,
  <I16><path d="M8 4 L14 11 H2z" {...grayed} fill="#c2c2c2" /></I16>,
  <I16><path d="M8 11 L14 4 H2z" {...grayed} fill="#c2c2c2" /></I16>,
  <I16><path d="M4 8 L11 2 V14z" {...grayed} /></I16>,
  <I16><path d="M1 1.5 H13 L8.5 7 V13 L5.5 14 V7z" fill="#3a66d8" stroke="#1c2c66" /><path d="M15.5 16 v-4 l-4 4z" /></I16>,
  <I16><path d="M2.5 1.5 H9 L12 5 V14.5 H2.5z" fill="#c4c5c9" stroke="#8d8f94" /><path d="M16 16 v-4 l-4 4z" fill="#888" /></I16>,
  <I16><path d="M2 14 L9 6" stroke="#3a5fd0" strokeWidth="2.4" /><path d="M5 2 Q10 1 14 7 L12 8 L9 6 L6 7z" fill="#222" /><path d="M16 16 v-4 l-4 4z" /></I16>,
  <I16><circle cx="8" cy="8" r="6.8" fill="#2f5fd6" stroke="#1b2f80" /><text x="8" y="12" fontSize="11" fontWeight="700" fill="#fff" textAnchor="middle" letterSpacing="0" fontFamily="Liberation Sans">?</text></I16>,
];

export default function App() {
  return (
    <Screen>
      <Global />
      <TitleBar>
        <RhinoLogo w={16} />
        <span>Rhino 7 Commercial - [Perspective]</span>
        <WindowButtons>
          {['M1 6.5 H11', 'M1.5 3.5 H8.5 V10.5 H1.5z M3.5 3.5 V1.5 H10.5 V8.5 H8.5', 'M1 1 L11 11 M11 1 L1 11'].map((d) => (
            <svg key={d} width="12" height="12" viewBox="0 0 12 12"><path d={d} fill="none" stroke="#8a8a8a" /></svg>
          ))}
        </WindowButtons>
      </TitleBar>
      <MenuBar>{menus.map(([m, w]) => <Slot key={m} $w={w}>{m}</Slot>)}</MenuBar>
      <CommandArea>
        <History>
          <HistoryLines>
            <div>Command: wdReorderGems</div>
            <div>Command: _-RunPythonScript</div>
            <div>Python Script &lt;D:\JewelryKit3.10_Rhino7\scripts\wdReorderGem</div>
          </HistoryLines>
          <ScrollTrack><Caret d="M1 6 L4 3 L7 6" /><ScrollThumb /><Caret d="M1 2 L4 5 L7 2" /></ScrollTrack>
        </History>
        <Prompt>
          <span>Python Script &lt;D:\JewelryKit3.10_Rhino7\scripts\wdReorder</span>
          <Spinner>
            <SpinButton><svg width="6" height="4"><path d="M0 4 L3 0 L6 4z" /></svg></SpinButton>
            <SpinButton><svg width="6" height="4"><path d="M0 0 L3 4 L6 0z" /></svg></SpinButton>
          </Spinner>
        </Prompt>
      </CommandArea>
      <TabStrip>
        {toolTabs.map(([t, w]) => <TabLabel key={t} $w={w}>{t}</TabLabel>)}
        <div style={{ marginLeft: 'auto' }}><Gear c="#8a8c92" /></div>
      </TabStrip>
      <ToolRow>
        {topIcons.map(([gap, icon], i) => (
          <ToolSlot key={i} $gap={gap}>
            <svg width="36" height="36" viewBox="0 0 36 36">
              <defs><radialGradient id="ballT" cx=".35" cy=".35"><stop offset="0" stopColor="#c9d9ff" /><stop offset="1" stopColor="#3b62d8" /></radialGradient></defs>
              {icon}
            </svg>
          </ToolSlot>
        ))}
        <ToolSlot $gap={984}>
          <svg width="36" height="36" viewBox="0 0 36 36">
            <path d="M2 7 H32 M2 14 H32 M2 21 H32 M2 28 H32" stroke="#a5a7ac" strokeWidth="1.6" />
            <path d="M16 7 H32 M16 7 V21 H32" fill="none" stroke="#000" strokeWidth="2" /><P2 at={[[16, 7], [16, 21]]} />
          </svg>
        </ToolSlot>
        <ToolSlot $gap={1}>
          <svg width="36" height="36" viewBox="0 0 36 36">
            <path d="M3 16 Q4 8 12 7 H23 Q30 8 30 16 Q30 23 24 25 H8 Q3 24 3 16z" fill="#5b7cf0" stroke="#0a0d22" strokeWidth="2" />
            <path d="M5 12 L11 15 M28 12 L22 15 M16 20 V25" stroke="#0a0d22" /><rect x="11" y="10" width="11" height="11" rx="4" fill="#e9ebf0" stroke="#0a0d22" strokeWidth="2" />
          </svg>
        </ToolSlot>
      </ToolRow>

      <Main>
        <Side>
          <Grip $m="0 7px 0 3px" />
          <SideGrid>
            {leftIcons.map((icon, i) => (
              <svg key={i} width="36" height="36" viewBox={`${(i % 2) * 108} ${33 + 108 * Math.floor(i / 2)} 108 108`}>{icon}</svg>
            ))}
          </SideGrid>
        </Side>
        <Center>
          <Viewport>
            <Scene width="1500" height="727" viewBox="87 205 1500 727">
              <path d={minor} stroke="#8f969e" strokeWidth="1" opacity=".68" />
              <path d={major} stroke="#82808a" strokeWidth="1.1" />
              <path d={seg(project(0, 0), project(12, 0))} stroke="#96474c" strokeWidth="1.8" />
              <path d={seg(project(0, 0), project(0, 12))} stroke="#4a984c" strokeWidth="1.8" />
              <path d="M444 934 C444 790 468 672 532 574 C552 540 580 507 606 483 C640 450 665 430 701 413 C740 392 780 374 808 366 C850 352 900 342 922 340.5 C965 334 1000 333.5 1039 333.5" fill="none" stroke="#050505" strokeWidth="2.6" />
              {gems.map((g) => <Gem key={g.cx} {...g} />)}
              <g stroke="#696e74" fill="none" strokeWidth="1.2"><path d="M123.5 870 V896 L144 887 M123.5 896 L102 886" /></g>
              <g fill="#696e74" fontFamily="Noto Sans, sans-serif" fontSize="13" letterSpacing="0"><text x="126" y="870">z</text><text x="147" y="887">x</text><text x="104" y="885">y</text></g>
            </Scene>
            <ViewLabel>Perspective<LabelArrow><svg width="8" height="5"><path d="M0 0 H8 L4 4.5z" fill="#161a2c" /></svg></LabelArrow></ViewLabel>
          </Viewport>
          <ViewTabs>
            <ViewTab $w={74} $on>Perspective</ViewTab>
            <ViewTab $w={35}>Top</ViewTab>
            <ViewTab $w={43}>Front</ViewTab>
            <ViewTab $w={43}>Right</ViewTab>
            <ViewTab $w={20}><svg width="9" height="20" viewBox="0 0 9 20"><path d="M3.5 6.5 h2 v3 h3 v2 h-3 v3 h-2 v-3 h-3 v-2 h3z" fill="none" stroke="#777" /></svg></ViewTab>
          </ViewTabs>
        </Center>
        <Palette>
          <Grip $m="0 3px 0 8px" />
          <PaletteGrid>
            {paletteIcons.map((icon, i) => (
              <svg key={i} width="36" height="36" viewBox={`${73 + (i % 2) * 108} ${37 + 108 * Math.floor(i / 2)} 108 108`}>
                <defs>
                  <radialGradient id="blueBall" cx=".35" cy=".3"><stop offset="0" stopColor="#a5d2fa" /><stop offset=".45" stopColor="#4f97e0" /><stop offset="1" stopColor="#2b74c4" /></radialGradient>
                  <radialGradient id="grayBall" cx=".35" cy=".3"><stop offset="0" stopColor="#ececec" /><stop offset="1" stopColor="#a3a3a3" /></radialGradient>
                  <linearGradient id="grayLin" x1="0" y1="0" x2="1" y2="1"><stop offset="0" stopColor="#e8e8e8" /><stop offset="1" stopColor="#9a9a9a" /></linearGradient>
                  <linearGradient id="blueLin"><stop offset="0" stopColor="#7ab8f2" /><stop offset="1" stopColor="#2b74c4" /></linearGradient>
                </defs>
                {icon}
              </svg>
            ))}
          </PaletteGrid>
        </Palette>
        <Layers>
          <PanelTitle>Layers<TitleRule /></PanelTitle>
          <PanelTabs>
            {panelTabs.map((icon, i) => <PanelTab key={i} $on={i === 2}>{icon}</PanelTab>)}
            <PanelTab><Gear c="#c3cde0" /></PanelTab>
          </PanelTabs>
          <PanelBody>
            <PanelTools>{panelTools.map((icon, i) => <PanelTool key={i}>{icon}</PanelTool>)}</PanelTools>
            <HeaderRow>
              <HeaderCell $w={115}>Layer</HeaderCell><HeaderCell $w={17} /><HeaderCell $w={17} /><HeaderCell $w={17} /><HeaderCell $w={17} />
              <div style={{ marginLeft: 6 }}>Material</div>
            </HeaderRow>
            <LayerRows>
              {layers.map(([name, color], i) => (
                <LayerRow key={name} $on={i === 0}>
                  <LayerCell $w={114}>{name}</LayerCell>
                  <LayerCell $w={18}>{i === 0 && <svg width="14" height="12" viewBox="0 0 14 12"><path d="M1 6 L4.5 10 L12.5 1.5" fill="none" stroke="#111" strokeWidth="1.6" /></svg>}</LayerCell>
                  <LayerCell $w={17}>{i > 0 && <svg width="10" height="13" viewBox="0 0 10 13"><path d="M5 .8 A3.7 3.7 0 0 0 2 7 L3.3 9.5 V12 H6.7 V9.5 L8 7 A3.7 3.7 0 0 0 5 .8z" fill="#ffe774" stroke="#5c4a10" strokeWidth=".9" /></svg>}</LayerCell>
                  <LayerCell $w={17}>{i > 0 && <svg width="12" height="13" viewBox="0 0 12 13"><path d="M6.5 6 V3.5 A2.2 2.2 0 0 1 11 3.5 V5" fill="none" stroke="#222" strokeWidth="1.2" /><rect x=".8" y="5.8" width="8" height="6.4" fill="#ffd83d" stroke="#5c4a10" /></svg>}</LayerCell>
                  <Swatch $c={color} />
                  <MatDot />
                </LayerRow>
              ))}
            </LayerRows>
            <HScroll><Caret d="M6 1 L3 4 L6 7" /><HThumb /><Caret d="M2 1 L5 4 L2 7" /></HScroll>
            <PanelFoot />
          </PanelBody>
        </Layers>
      </Main>

      <CheckRow $h={38} $pad={9}><Checks items={filters} /></CheckRow>
      <CheckRow $h={26} $pad={6}><Checks items={snaps} /></CheckRow>
      <StatusBar>
        <StatusCell $w={60}>CPlane</StatusCell>
        <StatusCell $w={88}>x 30.026</StatusCell>
        <StatusCell $w={88}>y -3.891</StatusCell>
        <StatusCell $w={88}>z</StatusCell>
        <StatusCell $w={88}>Millimeters</StatusCell>
        <StatusCell $w={168} $left><BlackChip />Default</StatusCell>
        <StatusCell $w={83}>Grid Snap</StatusCell>
        <StatusCell $w={55}>Ortho</StatusCell>
        <StatusCell $w={58} $on>Planar</StatusCell>
        <StatusCell $w={59} $on>Osnap</StatusCell>
        <StatusCell $w={93}>SmartTrack</StatusCell>
        <StatusCell $w={73} $on>Gumball</StatusCell>
        <StatusCell $w={117} $on>Record History</StatusCell>
        <StatusCell $w={49}>Filter</StatusCell>
        <StatusCell $w={746} $left style={{ paddingLeft: 1 }}>Memory use: 593 MB</StatusCell>
      </StatusBar>

      <Taskbar>
        <Start><svg width="17" height="17" viewBox="0 0 17 17"><path d="M0 2.4 L7.5 1.3 V8 H0z M8.5 1.2 L17 0 V8 H8.5z M0 9 H7.5 V15.7 L0 14.6z M8.5 9 H17 V17 L8.5 15.8z" fill="#fff" /></svg></Start>
        <Search>
          <svg width="17" height="17" viewBox="0 0 17 17"><circle cx="10.5" cy="6.5" r="5.4" fill="none" stroke="#eee" strokeWidth="1.3" /><path d="M6.6 10.4 L1 16" stroke="#eee" strokeWidth="1.3" /></svg>
          Type here to search
        </Search>
        {tasks.map((t, i) => <Task key={i} $w={t.w} $run={t.run} $on={t.on}>{t.icon}</Task>)}
        <Slot $w={28} />
        <Task $run><RhinoLogo w={24} n="8" /></Task>
        <Tray>
          <TraySlot $w={23}><svg width="12" height="8" viewBox="0 0 12 8"><path d="M1 7 L6 1.5 L11 7" fill="none" stroke="#eee" strokeWidth="1.4" /></svg></TraySlot>
          <TraySlot $w={25}><I16><path d="M7 0 L14 2 V7 Q14 12 7 15 Q0 12 0 7 V2z" fill="#fff" /><path d="M7 1 V14 M0 7 H13" stroke="#222" strokeWidth="1.2" /><circle cx="11" cy="11" r="4.8" fill="#15974a" /><path d="M8.8 11 L10.5 12.7 L13.3 9.5" fill="none" stroke="#fff" strokeWidth="1.2" /></I16></TraySlot>
          <TraySlot $w={23}><I16><path d="M2 15 A13 13 0 0 1 14 3 M5.5 15 A9.5 9.5 0 0 1 14 7 M9 15 A6 6 0 0 1 14 10.5" fill="none" stroke="#ddd" strokeWidth="1.2" /><circle cx="13" cy="14" r="1.5" fill="#fff" /></I16></TraySlot>
          <TraySlot $w={23}><I16><path d="M1 6 H4 L8 2.5 V13.5 L4 10 H1z" fill="none" stroke="#eee" strokeWidth="1.1" /><path d="M10 6 Q11 8 10 10 M12 4.5 Q14 8 12 11.5 M14 3 Q17 8 14 13" fill="none" stroke="#aaa" strokeWidth="1" /></I16></TraySlot>
          <TraySlot $w={26}><I16><rect x="3" y="5" width="7" height="6.5" fill="none" stroke="#eee" strokeWidth="1.2" /><path d="M10 7 L13 5.5 V11 L10 9.5 M4 2.5 Q8 0 12 2.5 M4 14 Q8 16.5 12 14" fill="none" stroke="#eee" strokeWidth="1.1" /></I16></TraySlot>
          <TraySlot $w={24}><I16><path d="M4 1 L7 3 L4 5 L1 3z M12 1 L15 3 L12 5 L9 3z M12 6 L15 8 L12 10 L9 8z M8 12 L11 10.5 L13 12 L10 14z" fill="#fff" /><rect x="0" y="5.5" width="9" height="10" rx="2.5" fill="#d3122a" /><text x="4.5" y="13.5" fontSize="8.5" fontWeight="700" fill="#fff" letterSpacing="0" textAnchor="middle" fontFamily="Open Sans">6</text></I16></TraySlot>
          <TraySlot $w={34}><I16><path d="M1 12 Q1 8 5 10 Q8 12 5 14 Q1 15 1 12 M6 12 L12 1 L14 2 L9 13 M12 6 L15 8 M6 14 Q12 14 14 10" fill="none" stroke="#eee" strokeWidth="1.2" /></I16></TraySlot>
          <TraySlot $w={37}>ENG<br />US</TraySlot>
          <TraySlot $w={61}>7:09 PM<br />4/24/2025</TraySlot>
          <TraySlot $w={50}><svg width="26" height="28" viewBox="0 0 26 28"><path d="M1 3 H17 V15 H9 L5 19 V15 H1z" fill="#fff" /><path d="M4 6 H14 M4 9 H14 M4 12 H11" stroke="#222" /><circle cx="17" cy="19" r="8" fill="#3b3e44" stroke="#999" /><text x="17" y="23" fontSize="11" fill="#fff" letterSpacing="0" textAnchor="middle" fontFamily="Open Sans">1</text></svg></TraySlot>
          <Peek />
        </Tray>
      </Taskbar>

      <Dialog>
        <DialogTitle>
          <RhinoLogo w={16} />Reorder Gems
          <svg width="11" height="11" viewBox="0 0 11 11"><path d="M.5 .5 L10.5 10.5 M10.5 .5 L.5 10.5" stroke="#111" strokeWidth="1.1" /></svg>
        </DialogTitle>
        <DialogText>Select the gems in order.</DialogText>
        <DialogButtons><DialogButton $w={131} $hot>Select Gems</DialogButton><DialogButton $w={80}>Cancel</DialogButton></DialogButtons>
        <Cursor width="13" height="20" viewBox="0 0 13 20"><path d="M.8 1 V16 L4.3 12.9 L6.8 18.6 L9.3 17.5 L6.9 12 L11.6 11.6z" fill="#fff" stroke="#222" strokeWidth="1" /></Cursor>
      </Dialog>
      <Banner><BannerText>Gem Reorder Tool</BannerText></Banner>
      <Note>This tool corrects<br />problems caused by<br />mirroring or re-<br />grouping gems made<br />with other tools.</Note>
    </Screen>
  );
}
